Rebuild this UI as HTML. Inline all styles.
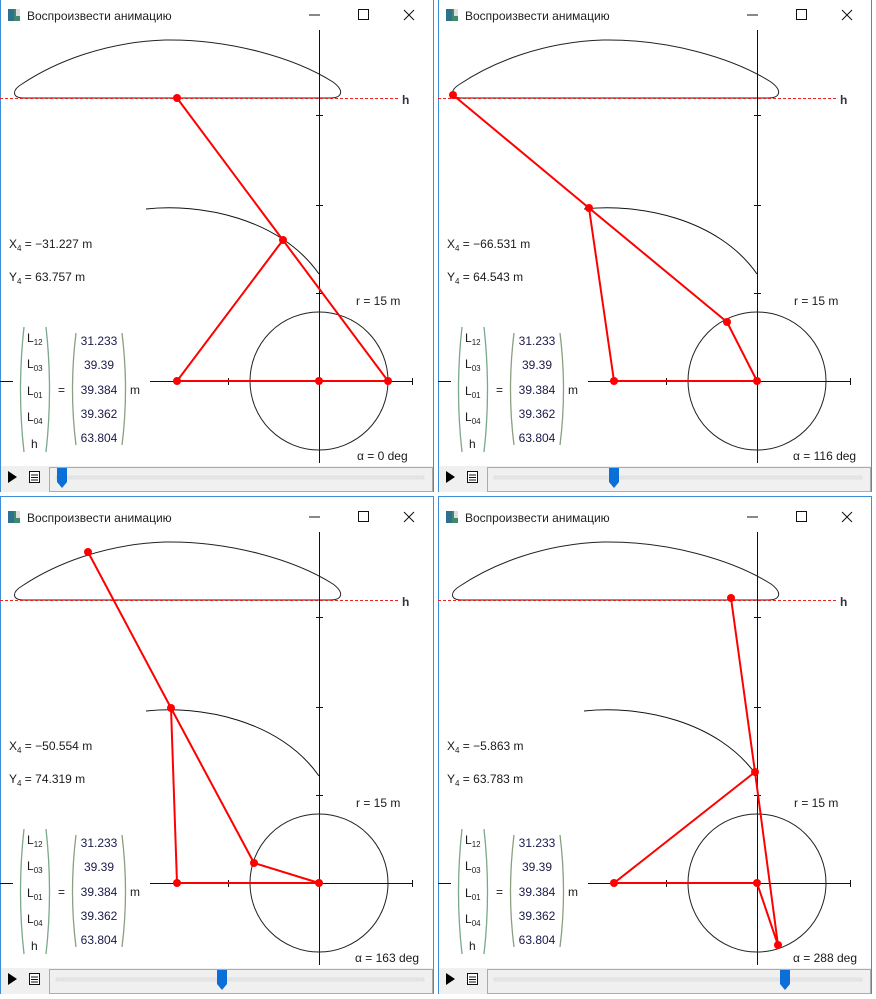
<!DOCTYPE html>
<html><head><meta charset="utf-8"><style>
html,body{margin:0;padding:0;background:#fff;width:876px;height:999px;overflow:hidden;position:relative}
svg{position:absolute;font-family:"Liberation Sans",Arial,sans-serif}
.t{font-size:12px;fill:#222}
.m{font-size:12px;fill:#1a1a1a}
.v{font-size:12px;fill:#1a1a4a}
.sub{font-size:8px}
</style></head><body>
<svg width="0" height="0" style="position:absolute">
<defs>
<g id="base">
<rect x="0" y="-6" width="436" height="498" fill="#fff"/>
<rect x="0.5" y="-5.5" width="433" height="498" fill="none" stroke="#3b8fd9"/>
<rect x="8" y="9" width="12" height="12" fill="#3f8a6a"/>
<rect x="8" y="9" width="6" height="12" fill="#2f6f8f"/>
<rect x="16" y="9" width="4" height="7" fill="#ddd"/>
<line x1="309" y1="15" x2="320" y2="15" stroke="#111"/>
<rect x="358.5" y="9.5" width="10" height="10" fill="none" stroke="#111"/>
<path d="M404 10 L414 20 M414 10 L404 20" stroke="#111"/>
<path d="M22 98 C12 97 12 90 22 84 C55 62 105 42 165 40 C230 39 295 58 333 82 C345 91 342 98 330 98 Z" fill="none" stroke="#222" stroke-width="1"/>
<line x1="0" y1="98.5" x2="400" y2="98.5" stroke="#e22" stroke-dasharray="3,2"/>
<text x="402" y="104" font-size="12" fill="#334" font-weight="bold">h</text>
<line x1="319.5" y1="30" x2="319.5" y2="463" stroke="#111"/>
<line x1="0" y1="381.5" x2="13" y2="381.5" stroke="#111"/>
<line x1="150" y1="381.5" x2="413" y2="381.5" stroke="#111"/>
<path d="M228.5 378v7 M412.5 378v7 M316 115.5h7 M316 205.5h7 M316 293.5h7" stroke="#111"/>
<path d="M146 209 C200 203 280 218 319 274" fill="none" stroke="#111"/>
<circle cx="319" cy="381" r="69" fill="none" stroke="#222"/>
<path d="M24 327 Q17 390 24 452 M46 327 Q53 390 46 452" fill="none" stroke="#7aa88a" stroke-width="1.3"/>
<path d="M76 333 Q69 390 76 445 M122 333 Q129 390 122 445" fill="none" stroke="#8aa080" stroke-width="1.3"/>
<text class="m" x="27" y="342">L<tspan class="sub" dy="3">12</tspan></text>
<text class="m" x="27" y="368">L<tspan class="sub" dy="3">03</tspan></text>
<text class="m" x="27" y="395">L<tspan class="sub" dy="3">01</tspan></text>
<text class="m" x="27" y="421">L<tspan class="sub" dy="3">04</tspan></text>
<text class="m" x="31" y="448">h</text>
<text class="m" x="58" y="394">=</text>
<text class="m" x="130" y="394">m</text>
<text class="v" x="99" y="345" text-anchor="middle">31.233</text>
<text class="v" x="99" y="369" text-anchor="middle">39.39</text>
<text class="v" x="99" y="394" text-anchor="middle">39.384</text>
<text class="v" x="99" y="418" text-anchor="middle">39.362</text>
<text class="v" x="99" y="442" text-anchor="middle">63.804</text>
<text class="m" x="356" y="305">r = 15 m</text>
<rect x="1" y="466" width="432" height="26" fill="#f0f0f0"/>
<path d="M8 471 L17 477 L8 483Z" fill="#000"/>
<rect x="29.5" y="471.5" width="10" height="11" fill="#fff" stroke="#111"/>
<path d="M31 475h7 M31 477.5h7 M31 480h7" stroke="#111"/>
<rect x="49.5" y="467.5" width="383" height="24" fill="none" stroke="#666" stroke-dasharray="1,1"/>
<rect x="56" y="476" width="368" height="3" fill="#e6e6e6" stroke="#d4d4d4" stroke-width="0.5"/>
</g>
<g id="thumb"><path d="M-5 0 H5 V14 L0 20 L-5 14Z" fill="#0a6fd6"/></g>
</defs></svg>

<!-- W1 -->
<svg style="left:0;top:-6px" width="436" height="498" viewBox="0 -6 436 498">
<use href="#base"/>
<text class="t" x="27" y="20">Воспроизвести анимацию</text>
<text class="m" x="9" y="248">X<tspan class="sub" dy="3">4</tspan><tspan dy="-3"> = −31.227 m</tspan></text>
<text class="m" x="9" y="281">Y<tspan class="sub" dy="3">4</tspan><tspan dy="-3"> = 63.757 m</tspan></text>
<text class="m" x="357" y="460">α = 0 deg</text>
<g stroke="#f00" stroke-width="2" fill="none"><path d="M177 98 L388 381 M283 240 L177 381 L388 381"/></g>
<g fill="#f00"><circle cx="177" cy="98" r="4"/><circle cx="283" cy="240" r="4"/><circle cx="177" cy="381" r="4"/><circle cx="319" cy="381" r="4"/><circle cx="388" cy="381" r="4"/></g>
<use href="#thumb" x="62" y="468"/>
</svg>

<!-- W2 -->
<svg style="left:438px;top:-6px" width="436" height="498" viewBox="0 -6 436 498">
<use href="#base"/>
<text class="t" x="27" y="20">Воспроизвести анимацию</text>
<text class="m" x="9" y="248">X<tspan class="sub" dy="3">4</tspan><tspan dy="-3"> = −66.531 m</tspan></text>
<text class="m" x="9" y="281">Y<tspan class="sub" dy="3">4</tspan><tspan dy="-3"> = 64.543 m</tspan></text>
<text class="m" x="355" y="460">α = 116 deg</text>
<g stroke="#f00" stroke-width="2" fill="none"><path d="M15 95 L151 208 L289 322 L319 381 M151 208 L176 381 L319 381"/></g>
<g fill="#f00"><circle cx="15" cy="95" r="4"/><circle cx="151" cy="208" r="4"/><circle cx="289" cy="322" r="4"/><circle cx="176" cy="381" r="4"/><circle cx="319" cy="381" r="4"/></g>
<use href="#thumb" x="176" y="468"/>
</svg>

<!-- W3 -->
<svg style="left:0;top:496px" width="436" height="498" viewBox="0 -6 436 498">
<use href="#base"/>
<text class="t" x="27" y="20">Воспроизвести анимацию</text>
<text class="m" x="9" y="248">X<tspan class="sub" dy="3">4</tspan><tspan dy="-3"> = −50.554 m</tspan></text>
<text class="m" x="9" y="281">Y<tspan class="sub" dy="3">4</tspan><tspan dy="-3"> = 74.319 m</tspan></text>
<text class="m" x="355" y="460">α = 163 deg</text>
<g stroke="#f00" stroke-width="2" fill="none"><path d="M88 50 L171 206 L254 361 L319 381 M171 206 L177 381 L319 381"/></g>
<g fill="#f00"><circle cx="88" cy="50" r="4"/><circle cx="171" cy="206" r="4"/><circle cx="254" cy="361" r="4"/><circle cx="177" cy="381" r="4"/><circle cx="319" cy="381" r="4"/></g>
<use href="#thumb" x="222" y="468"/>
</svg>

<!-- W4 -->
<svg style="left:438px;top:496px" width="436" height="498" viewBox="0 -6 436 498">
<use href="#base"/>
<text class="t" x="27" y="20">Воспроизвести анимацию</text>
<text class="m" x="9" y="248">X<tspan class="sub" dy="3">4</tspan><tspan dy="-3"> = −5.863 m</tspan></text>
<text class="m" x="9" y="281">Y<tspan class="sub" dy="3">4</tspan><tspan dy="-3"> = 63.783 m</tspan></text>
<text class="m" x="355" y="460">α = 288 deg</text>
<g stroke="#f00" stroke-width="2" fill="none"><path d="M293 96 L317 270 L340 443 M317 270 L176 381 L319 381 L340 443"/></g>
<g fill="#f00"><circle cx="293" cy="96" r="4"/><circle cx="317" cy="270" r="4"/><circle cx="176" cy="381" r="4"/><circle cx="319" cy="381" r="4"/><circle cx="340" cy="443" r="4"/></g>
<use href="#thumb" x="347" y="468"/>
</svg>
</body></html>
